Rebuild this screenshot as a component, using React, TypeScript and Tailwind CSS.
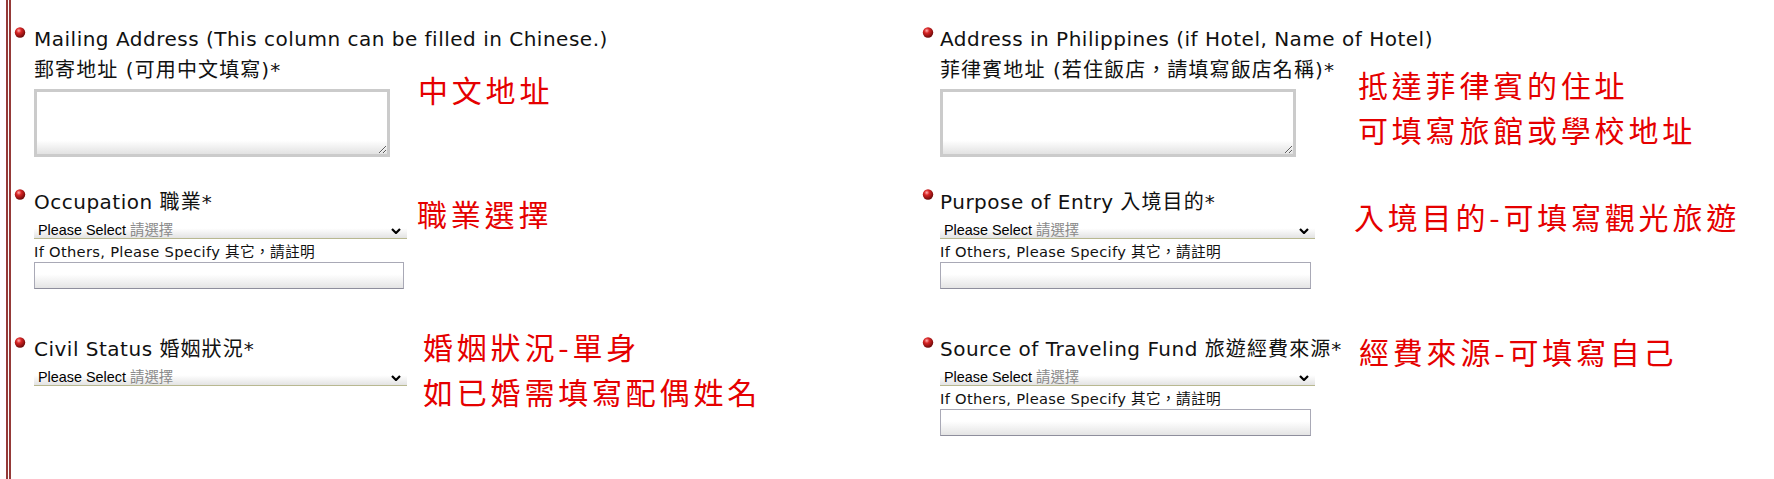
import React from 'react';

const Bullet = () => (
  <svg width="12" height="11" viewBox="0 0 12 11" className="block">
    <defs>
      <radialGradient id="ball" cx="38%" cy="32%" r="70%">
        <stop offset="0" stopColor="#ffb0b0" />
        <stop offset="0.35" stopColor="#d92626" />
        <stop offset="1" stopColor="#6a0808" />
      </radialGradient>
    </defs>
    <circle cx="6" cy="5.5" r="5.2" fill="url(#ball)" />
  </svg>
);

const Label = ({ children, className = '' }: { children: React.ReactNode; className?: string }) => (
  <div
    className={`whitespace-nowrap font-['DejaVu_Sans','Noto_Sans_CJK_TC',sans-serif] text-[20px] leading-[31px] tracking-[0.5px] text-[#111] ${className}`}
  >
    {children}
  </div>
);

const Zh = ({ children }: { children: React.ReactNode }) => (
  <span className="tracking-[1.1px]">{children}</span>
);

const Note = ({ className, children }: { className: string; children: React.ReactNode }) => (
  <div
    className={`whitespace-nowrap font-['Noto_Sans_CJK_TC',sans-serif] text-[30px] leading-[45px] tracking-[3.8px] text-[#e50000] ${className}`}
  >
    {children}
  </div>
);

const SelectBox = ({ className }: { className: string }) => (
  <div
    className={`flex h-[16px] items-center justify-between border-b border-[#b8b890] bg-[linear-gradient(to_bottom,#ffffff_35%,#e3e3e3)] pl-[4px] pr-[6px] ${className}`}
  >
    <span className="font-['Liberation_Sans','Noto_Sans_CJK_TC',sans-serif] text-[14.4px] leading-none text-black">
      Please Select <span className="text-[#8a8a8a]">請選擇</span>
    </span>
    <svg width="10" height="6" viewBox="0 0 10 6" className="block">
      <path d="M1 1l4 4 4-4" stroke="#000" strokeWidth="2.2" fill="none" />
    </svg>
  </div>
);

const OtherInput = ({ className }: { className: string }) => (
  <>
    <div className="mt-[5px] whitespace-nowrap font-['DejaVu_Sans','Noto_Sans_CJK_TC',sans-serif] text-[14.7px] leading-[16px] tracking-[0.3px] text-[#111]">
      If Others, Please Specify 其它，請註明
    </div>
    <input
      readOnly
      className={`mt-[2px] block h-[27px] border border-[#a9a9b6] border-b-[#8e8e9c] bg-[linear-gradient(to_bottom,#ffffff_45%,#e4e4e4)] outline-none ${className}`}
    />
  </>
);

const AddressBox = () => (
  <textarea
    readOnly
    className="mt-[3px] block h-[68px] w-[356px] border-[3px] border-[#cbcbcb] bg-[linear-gradient(to_bottom,#ffffff_78%,#e2e2e2)] outline-none"
  />
);

export default function App() {
  return (
    <div className="h-[479px] w-[1774px] overflow-hidden bg-white pl-[6px]">
      <div className="flex h-full flex-col border-l-[5px] border-double border-[#953a38] pl-[3px] pt-[24px]">
        {/* row 1 */}
        <div className="flex h-[163px] shrink-0">
          <div className="flex w-[908px] items-start">
            <div className="w-[20px] pt-[3px]">
              <Bullet />
            </div>
            <div className="w-[374px]">
              <Label>Mailing Address (This column can be filled in Chinese.)</Label>
              <Label className="tracking-[1.1px]">郵寄地址 (可用中文填寫)*</Label>
              <AddressBox />
            </div>
            <Note className="ml-[10px] mt-[43px]">中文地址</Note>
          </div>
          <div className="flex flex-1 items-start">
            <div className="w-[18px] pt-[3px]">
              <Bullet />
            </div>
            <div className="w-[375px]">
              <Label>Address in Philippines (if Hotel, Name of Hotel)</Label>
              <Label className="tracking-[1.1px]">菲律賓地址 (若住飯店，請填寫飯店名稱)*</Label>
              <AddressBox />
            </div>
            <Note className="ml-[43px] mt-[38px]">
              抵達菲律賓的住址
              <br />
              可填寫旅館或學校地址
            </Note>
          </div>
        </div>

        {/* row 2 */}
        <div className="flex h-[147px] shrink-0">
          <div className="flex w-[908px] items-start">
            <div className="w-[20px] pt-[2px]">
              <Bullet />
            </div>
            <div className="w-[374px]">
              <Label>
                Occupation <Zh>職業*</Zh>
              </Label>
              <SelectBox className="mt-[5px] w-[373px]" />
              <OtherInput className="w-[370px]" />
            </div>
            <Note className="ml-[9px] mt-[4px]">職業選擇</Note>
          </div>
          <div className="flex flex-1 items-start">
            <div className="w-[18px] pt-[2px]">
              <Bullet />
            </div>
            <div className="w-[375px]">
              <Label>
                Purpose of Entry <Zh>入境目的*</Zh>
              </Label>
              <SelectBox className="mt-[5px] w-[375px]" />
              <OtherInput className="w-[371px]" />
            </div>
            <Note className="ml-[39px] mt-[7px]">入境目的-可填寫觀光旅遊</Note>
          </div>
        </div>

        {/* row 3 */}
        <div className="flex flex-1">
          <div className="flex w-[908px] items-start">
            <div className="w-[20px] pt-[3px]">
              <Bullet />
            </div>
            <div className="w-[374px]">
              <Label>
                Civil Status <Zh>婚姻狀況*</Zh>
              </Label>
              <SelectBox className="mt-[5px] w-[373px]" />
            </div>
            <Note className="-mt-[10px] ml-[15px]">
              婚姻狀況-單身
              <br />
              如已婚需填寫配偶姓名
            </Note>
          </div>
          <div className="flex flex-1 items-start">
            <div className="w-[18px] pt-[3px]">
              <Bullet />
            </div>
            <div className="w-[375px]">
              <Label>
                Source of Traveling Fund <Zh>旅遊經費來源*</Zh>
              </Label>
              <SelectBox className="mt-[5px] w-[375px]" />
              <OtherInput className="w-[371px]" />
            </div>
            <Note className="-mt-[5px] ml-[44px]">經費來源-可填寫自己</Note>
          </div>
        </div>
      </div>
    </div>
  );
}
